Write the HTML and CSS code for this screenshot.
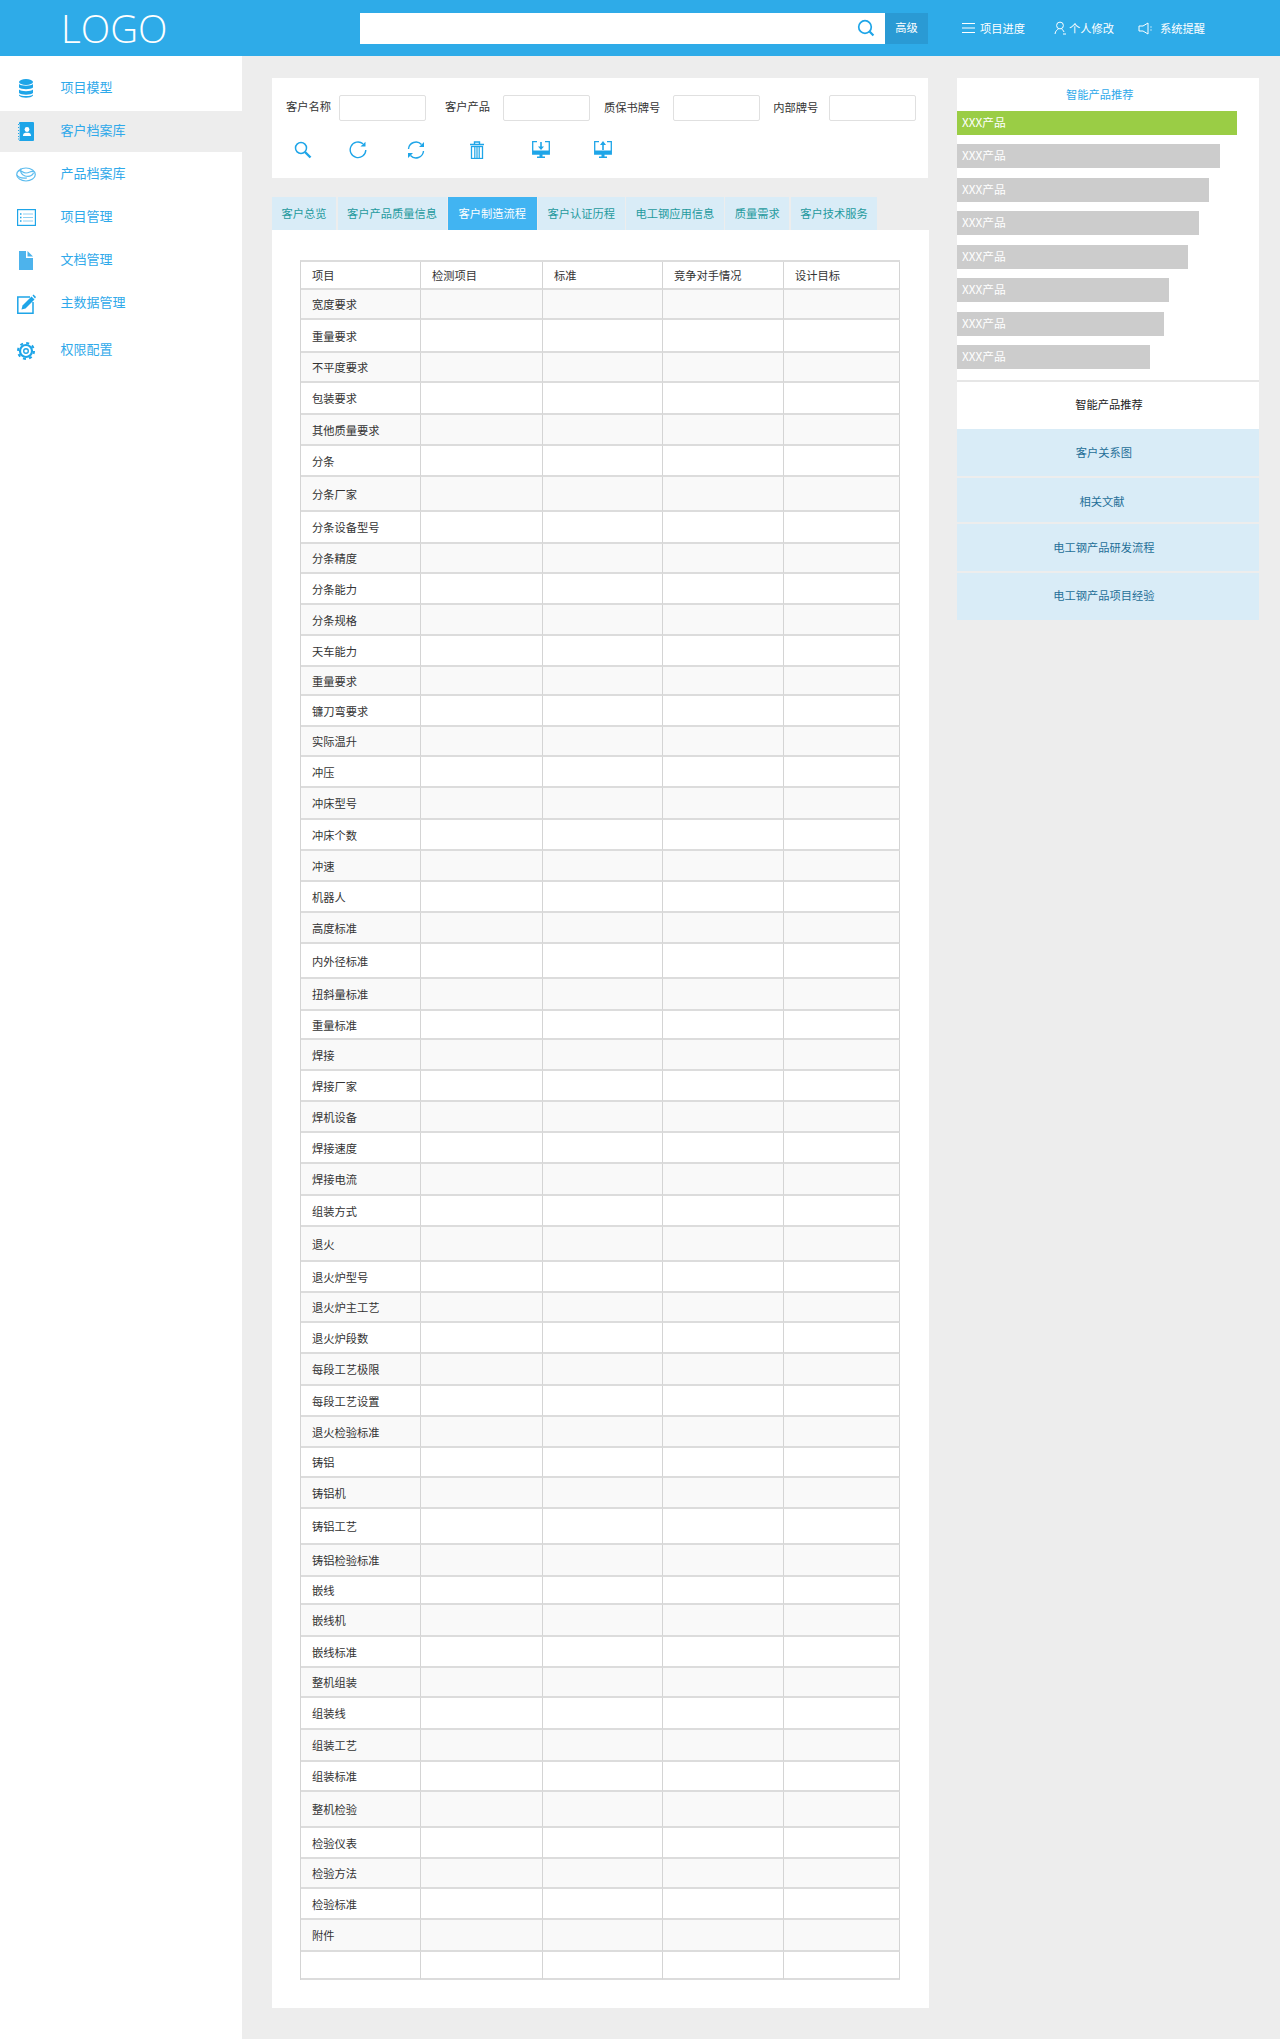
FILE: index.html
```html
<!DOCTYPE html>
<html lang="zh-CN">
<head>
    <meta charset="UTF-8">
    <title>客户制造流程</title>
    <link rel="stylesheet" href="styles.css">
</head>
<body>
    <header class="topbar">
        <div class="logo">LOGO</div>
        <div class="search">
            <div class="search-box">
                <svg class="search-icon" viewBox="0 0 18 18" width="18" height="18"><circle cx="8" cy="8" r="6.3" fill="none" stroke="#1ea5e8" stroke-width="1.7"/><path d="M12.6 12.6L16.4 16.6" stroke="#1ea5e8" stroke-width="2.2" fill="none"/></svg>
            </div>
            <div class="search-btn">高级</div>
        </div>
        <nav class="topnav">
            <a class="nav-first">
                <svg viewBox="0 0 13 12" width="13" height="12"><path d="M0 1.5H13M0 6H13M0 10.5H13" stroke="#fff" stroke-width="1" fill="none"/></svg>
                项目进度
            </a>
            <a class="nav-second">
                <svg viewBox="0 0 13 14" width="13" height="14"><circle cx="6" cy="4.5" r="3.4" fill="none" stroke="#fff"/><path d="M1 13C1.5 9.5 3.5 8.5 4.5 8M7.5 8C8.5 8.5 9.5 9.5 10 11M9 13H12" stroke="#fff" fill="none"/></svg>
                个人修改
            </a>
            <a class="nav-third">
                <svg viewBox="0 0 15 13" width="15" height="13"><path d="M1 4H5L10 1V12L5 9H1Z" fill="none" stroke="#fff"/><path d="M13 4.5V5.5M13 7.5V8.5" stroke="#fff" stroke-width="1.2"/></svg>
                系统提醒
            </a>
        </nav>
    </header>

    <div class="layout">
        <aside class="sidebar">
            <a class="side-item">
                <i class="side-icon"><svg viewBox="0 0 14 19" width="14" height="19"><ellipse cx="7" cy="3" rx="7" ry="3" fill="#1ea5e8"/><path d="M0 5C2 7.3 12 7.3 14 5V8.5C12 10.8 2 10.8 0 8.5Z" fill="#1ea5e8"/><path d="M0 10.5C2 12.8 12 12.8 14 10.5V14C12 16.3 2 16.3 0 14Z" fill="#1ea5e8"/><path d="M0 15.5C2 17.5 12 17.5 14 15.5V16.5C12 19.5 2 19.5 0 16.5Z" fill="#1ea5e8"/></svg></i>
                <span>项目模型</span>
            </a>
            <a class="side-item active">
                <i class="side-icon"><svg viewBox="0 0 16 19" width="16" height="19"><rect x="1" y="0" width="15" height="19" rx="1" fill="#1ea5e8"/><path d="M0 2.5H3M0 5.5H3M0 8.5H3M0 11.5H3M0 14.5H3M0 17H3" stroke="#1ea5e8" stroke-width="1"/><path d="M1.5 2V18" stroke="#ededed" stroke-width=".6"/><circle cx="9" cy="7.5" r="2.4" fill="#fff"/><path d="M5 14C5 11 7 10.8 9 10.8S13 11 13 14Z" fill="#fff"/></svg></i>
                <span>客户档案库</span>
            </a>
            <a class="side-item">
                <i class="side-icon"><svg viewBox="0 0 20 15" width="20" height="15" fill="none" stroke="#5dbcee" stroke-width="1.2"><ellipse cx="10" cy="7.5" rx="9.3" ry="6.5"/><path d="M2 4C5 2 6 6 10 6S15 3 18 5M5 1.5C4 4 5 8 9 9S16 9 17.5 6M1 8C3 12 8 11 11 11"/></svg></i>
                <span>产品档案库</span>
            </a>
            <a class="side-item">
                <i class="side-icon"><svg viewBox="0 0 19 17" width="19" height="17" fill="none" stroke="#1ea5e8"><rect x=".6" y=".6" width="17.8" height="15.8" stroke-width="1.2"/><path d="M6 5H16M6 8.5H16M6 12H16" stroke="#8fd0f3"/><path d="M3 5H4.5M3 8.5H4.5M3 12H4.5" stroke-width="1.4"/></svg></i>
                <span>项目管理</span>
            </a>
            <a class="side-item">
                <i class="side-icon"><svg viewBox="0 0 14 19" width="14" height="19"><path d="M0 0H7V7H14V19H0Z" fill="#4db3ec"/><path d="M8.5 0L14 5.5H8.5Z" fill="#4db3ec"/></svg></i>
                <span>文档管理</span>
            </a>
            <a class="side-item">
                <i class="side-icon"><svg viewBox="0 0 19 20" width="19" height="20"><path d="M13 3H.8V19.2H16V8" fill="none" stroke="#1ea5e8" stroke-width="1.5"/><path d="M4.5 15.5L5.5 11.5L14.5 2.5L17.5 5.5L8.5 14.5Z" fill="#1ea5e8"/><path d="M15.5 1.5L16.5 .5L19 3L18 4.5Z" fill="#1ea5e8"/></svg></i>
                <span>主数据管理</span>
            </a>
            <a class="side-item side-last">
                <i class="side-icon"><svg viewBox="0 0 18 18" width="18" height="18"><circle cx="9" cy="9" r="6" fill="none" stroke="#1ea5e8" stroke-width="2.2"/><circle cx="9" cy="9" r="8" fill="none" stroke="#1ea5e8" stroke-width="2" stroke-dasharray="3 3.28"/><circle cx="9" cy="9" r="2.3" fill="none" stroke="#1ea5e8" stroke-width="1.4"/></svg></i>
                <span>权限配置</span>
            </a>
        </aside>

        <main class="main">
            <section class="filter-card">
                <div class="fields">
                    <label class="field field-first"><span>客户名称</span><input type="text"></label>
                    <label class="field field-second"><span>客户产品</span><input type="text"></label>
                    <label class="field field-low"><span>质保书牌号</span><input type="text"></label>
                    <label class="field field-low field-last"><span>内部牌号</span><input type="text"></label>
                </div>
                <div class="tools">
                    <svg viewBox="0 0 18 18" width="18" height="18" fill="none" stroke="#1ea5e8"><circle cx="7" cy="7" r="5.5" stroke-width="1.5"/><path d="M11 11L16.5 16.5" stroke-width="2.4"/></svg>
                    <svg viewBox="0 0 18 18" width="18" height="18" fill="none" stroke="#1ea5e8"><path d="M14 2.8A7.8 7.8 0 1 0 16.8 9" stroke-width="1.4"/><path d="M11.5 5.5H16.5V.8Z" fill="#1ea5e8" stroke="none"/></svg>
                    <svg viewBox="0 0 18 18" width="18" height="18" fill="none" stroke="#1ea5e8"><path d="M1.5 8A7.5 7.5 0 0 1 14.5 3.5M16.5 10A7.5 7.5 0 0 1 3.5 14.5" stroke-width="1.4"/><path d="M12 6H17V1ZM6 12H1V17Z" fill="#1ea5e8" stroke="none"/></svg>
                    <svg viewBox="0 0 16 18" width="16" height="18" fill="none" stroke="#1ea5e8"><path d="M1 3.5H15M5.5 3V1H10.5V3" stroke-width="1.4"/><rect x="2.5" y="5.5" width="11" height="12" stroke-width="1.3"/><path d="M5.8 6V17M8 6V17M10.2 6V17" stroke-width="1.2"/></svg>
                    <svg viewBox="0 0 18 18" width="18" height="18"><path d="M5 .7H.7V13H17.3V.7H13" fill="none" stroke="#1ea5e8" stroke-width="1.3"/><path d="M1 9.5H17V13H1Z" fill="#1ea5e8"/><path d="M9 1V7" stroke="#1ea5e8" stroke-width="1.6"/><path d="M6 5.5H12L9 9Z" fill="#1ea5e8"/><path d="M7.5 13H10.5V15.5H13V17H5V15.5H7.5Z" fill="#1ea5e8"/></svg>
                    <svg viewBox="0 0 18 18" width="18" height="18"><path d="M5 .7H.7V13H17.3V.7H13" fill="none" stroke="#1ea5e8" stroke-width="1.3"/><path d="M1 9.5H17V13H1Z" fill="#1ea5e8"/><path d="M9 3V9" stroke="#1ea5e8" stroke-width="1.6"/><path d="M6 4H12L9 0Z" fill="#1ea5e8"/><path d="M7.5 13H10.5V15.5H13V17H5V15.5H7.5Z" fill="#1ea5e8"/></svg>
                </div>
            </section>

            <div class="tabs">
                <a class="tab">客户总览</a>
                <a class="tab">客户产品质量信息</a>
                <a class="tab active">客户制造流程</a>
                <a class="tab">客户认证历程</a>
                <a class="tab">电工钢应用信息</a>
                <a class="tab">质量需求</a>
                <a class="tab">客户技术服务</a>
            </div>

            <section class="table-card">
                <table class="grid">
                    <thead>
                        <tr class="h28"><th>项目</th><th>检测项目</th><th>标准</th><th>竞争对手情况</th><th>设计目标</th></tr>
                    </thead>
                    <tbody>
                        <tr class="h30"><td>宽度要求</td><td></td><td></td><td></td><td></td></tr>
                        <tr class="h33"><td>重量要求</td><td></td><td></td><td></td><td></td></tr>
                        <tr class="h30"><td>不平度要求</td><td></td><td></td><td></td><td></td></tr>
                        <tr class="h32"><td>包装要求</td><td></td><td></td><td></td><td></td></tr>
                        <tr><td>其他质量要求</td><td></td><td></td><td></td><td></td></tr>
                        <tr><td>分条</td><td></td><td></td><td></td><td></td></tr>
                        <tr class="h35"><td>分条厂家</td><td></td><td></td><td></td><td></td></tr>
                        <tr class="h32"><td>分条设备型号</td><td></td><td></td><td></td><td></td></tr>
                        <tr class="h30"><td>分条精度</td><td></td><td></td><td></td><td></td></tr>
                        <tr><td>分条能力</td><td></td><td></td><td></td><td></td></tr>
                        <tr><td>分条规格</td><td></td><td></td><td></td><td></td></tr>
                        <tr><td>天车能力</td><td></td><td></td><td></td><td></td></tr>
                        <tr class="h29"><td>重量要求</td><td></td><td></td><td></td><td></td></tr>
                        <tr><td>镰刀弯要求</td><td></td><td></td><td></td><td></td></tr>
                        <tr class="h30"><td>实际温升</td><td></td><td></td><td></td><td></td></tr>
                        <tr><td>冲压</td><td></td><td></td><td></td><td></td></tr>
                        <tr class="h32"><td>冲床型号</td><td></td><td></td><td></td><td></td></tr>
                        <tr><td>冲床个数</td><td></td><td></td><td></td><td></td></tr>
                        <tr><td>冲速</td><td></td><td></td><td></td><td></td></tr>
                        <tr><td>机器人</td><td></td><td></td><td></td><td></td></tr>
                        <tr><td>高度标准</td><td></td><td></td><td></td><td></td></tr>
                        <tr class="h35"><td>内外径标准</td><td></td><td></td><td></td><td></td></tr>
                        <tr class="h32"><td>扭斜量标准</td><td></td><td></td><td></td><td></td></tr>
                        <tr class="h29"><td>重量标准</td><td></td><td></td><td></td><td></td></tr>
                        <tr><td>焊接</td><td></td><td></td><td></td><td></td></tr>
                        <tr><td>焊接厂家</td><td></td><td></td><td></td><td></td></tr>
                        <tr><td>焊机设备</td><td></td><td></td><td></td><td></td></tr>
                        <tr><td>焊接速度</td><td></td><td></td><td></td><td></td></tr>
                        <tr class="h32"><td>焊接电流</td><td></td><td></td><td></td><td></td></tr>
                        <tr><td>组装方式</td><td></td><td></td><td></td><td></td></tr>
                        <tr class="h35"><td>退火</td><td></td><td></td><td></td><td></td></tr>
                        <tr><td>退火炉型号</td><td></td><td></td><td></td><td></td></tr>
                        <tr class="h30"><td>退火炉主工艺</td><td></td><td></td><td></td><td></td></tr>
                        <tr><td>退火炉段数</td><td></td><td></td><td></td><td></td></tr>
                        <tr class="h32"><td>每段工艺极限</td><td></td><td></td><td></td><td></td></tr>
                        <tr><td>每段工艺设置</td><td></td><td></td><td></td><td></td></tr>
                        <tr><td>退火检验标准</td><td></td><td></td><td></td><td></td></tr>
                        <tr class="h30"><td>铸铝</td><td></td><td></td><td></td><td></td></tr>
                        <tr><td>铸铝机</td><td></td><td></td><td></td><td></td></tr>
                        <tr class="h36"><td>铸铝工艺</td><td></td><td></td><td></td><td></td></tr>
                        <tr class="h32"><td>铸铝检验标准</td><td></td><td></td><td></td><td></td></tr>
                        <tr class="h28"><td>嵌线</td><td></td><td></td><td></td><td></td></tr>
                        <tr class="h32"><td>嵌线机</td><td></td><td></td><td></td><td></td></tr>
                        <tr><td>嵌线标准</td><td></td><td></td><td></td><td></td></tr>
                        <tr class="h30"><td>整机组装</td><td></td><td></td><td></td><td></td></tr>
                        <tr class="h32"><td>组装线</td><td></td><td></td><td></td><td></td></tr>
                        <tr class="h32"><td>组装工艺</td><td></td><td></td><td></td><td></td></tr>
                        <tr class="h30"><td>组装标准</td><td></td><td></td><td></td><td></td></tr>
                        <tr class="h36"><td>整机检验</td><td></td><td></td><td></td><td></td></tr>
                        <tr><td>检验仪表</td><td></td><td></td><td></td><td></td></tr>
                        <tr class="h30"><td>检验方法</td><td></td><td></td><td></td><td></td></tr>
                        <tr><td>检验标准</td><td></td><td></td><td></td><td></td></tr>
                        <tr class="h32"><td>附件</td><td></td><td></td><td></td><td></td></tr>
                        <tr class="h28"><td></td><td></td><td></td><td></td><td></td></tr>
                    </tbody>
                </table>
            </section>
        </main>

        <aside class="side-panel">
            <div class="rank-card">
                <h3 class="rank-title">智能产品推荐</h3>
                <div class="bars">
                    <div class="bar bar-top" style="width: 280px">XXX产品</div>
                    <div class="bar" style="width: 263px">XXX产品</div>
                    <div class="bar" style="width: 252px">XXX产品</div>
                    <div class="bar" style="width: 242px">XXX产品</div>
                    <div class="bar" style="width: 231px">XXX产品</div>
                    <div class="bar" style="width: 212px">XXX产品</div>
                    <div class="bar" style="width: 207px">XXX产品</div>
                    <div class="bar" style="width: 193px">XXX产品</div>
                </div>
            </div>
            <div class="links-card">
                <h3 class="links-title">智能产品推荐</h3>
                <a class="link-row">客户关系图</a>
                <a class="link-row link-short">相关文献</a>
                <a class="link-row">电工钢产品研发流程</a>
                <a class="link-row link-last">电工钢产品项目经验</a>
            </div>
        </aside>
    </div>
</body>
</html>
```

FILE: styles.css
```css
:root {
    --blue: #2eabe8;
    --pale-blue: #d9ecf7;
    --page-bg: #ededed;
    --line: #dcdcdc;
}

* {
    box-sizing: border-box;
}

body {
    margin: 0;
    min-height: 2039px;
    background: var(--page-bg);
    color: #333;
    font-family: "Noto Sans CJK SC", "Liberation Sans", sans-serif;
    font-size: 11.25px;
}

h3 {
    margin: 0;
    font-weight: normal;
    font-size: 11.25px;
}

/* top bar */
.topbar {
    display: flex;
    align-items: center;
    height: 56px;
    background: var(--blue);
    color: #fff;
}

.logo {
    width: 360px;
    padding-left: 61px;
    font-family: "Open Sans", sans-serif;
    font-size: 38.5px;
    font-weight: 300;
    line-height: 56px;
}

.search {
    display: flex;
    width: 568px;
    height: 31px;
}

.search-box {
    display: flex;
    flex: 1;
    align-items: center;
    justify-content: flex-end;
    padding-right: 10px;
    background: #fff;
}

.search-btn {
    width: 43px;
    background: #2a9ad4;
    line-height: 29px;
    text-align: center;
}

.topnav {
    display: flex;
    align-items: center;
    padding-left: 34px;
}

.topnav a {
    display: flex;
    align-items: center;
    gap: 5px;
}

.topnav .nav-first {
    margin-right: 29px;
}

.topnav .nav-second {
    gap: 2px;
    margin-right: 24px;
}

.topnav .nav-third {
    gap: 7px;
}

/* left menu */
.layout {
    display: flex;
    align-items: flex-start;
}

.sidebar {
    width: 242px;
    min-height: 1983px;
    padding-top: 12px;
    background: #fff;
}

.side-item {
    display: flex;
    align-items: center;
    height: 41px;
    margin-bottom: 2px;
    color: #2fa9ea;
    font-size: 13px;
}

.side-item.active {
    background: var(--page-bg);
}

.side-icon {
    display: flex;
    justify-content: center;
    width: 20px;
    margin: 0 24.5px 0 16px;
}

.side-item span {
    margin-bottom: 5px;
}

.side-last {
    margin-top: 6px;
}

/* main column */
.main {
    width: 657px;
    margin: 22px 0 0 30px;
}

.filter-card {
    width: 656px;
    height: 100px;
    padding: 16px 0 0 14px;
    background: #fff;
}

.fields {
    display: flex;
}

.field {
    display: flex;
    align-items: center;
    gap: 13px;
    margin-right: 13px;
}

.field span {
    margin-bottom: 3px;
}

.field input {
    width: 87px;
    height: 26px;
    padding: 0;
    border: 1px solid #e0e0e0;
    border-radius: 2px;
    background: #fff;
}

.field-first {
    gap: 8px;
    margin-right: 19px;
}

.field-second {
    margin-right: 14px;
}

.field-low {
    padding-top: 1px;
}

.field-last {
    gap: 11px;
    margin-right: 0;
}

.tools {
    display: flex;
    align-items: center;
    margin-top: 20px;
    padding-left: 8px;
}

.tools svg:nth-child(2) {
    margin-left: 37px;
}

.tools svg:nth-child(3) {
    margin-left: 40px;
}

.tools svg:nth-child(4) {
    margin-left: 44px;
}

.tools svg:nth-child(5) {
    margin-left: 47px;
}

.tools svg:nth-child(6) {
    margin-left: 44px;
}

.tabs {
    display: flex;
    gap: 1.5px;
    margin-top: 19px;
}

.tab {
    padding: 0 9.5px;
    background: var(--pale-blue);
    color: #1f9a9e;
    line-height: 33px;
}

.tab.active {
    padding: 0 10.5px;
    background: #41b4f2;
    color: #fff;
}

.table-card {
    height: 1778px;
    padding: 30px 0 0 28px;
    background: #fff;
}

.grid {
    width: 600px;
    border-collapse: separate;
    border-spacing: 0;
    border-top: 2px solid var(--line);
    border-left: 1px solid #d4d4d4;
    table-layout: fixed;
}

.grid th,
.grid td {
    padding: 0 0 0 11px;
    border-right: 1px solid #d4d4d4;
    border-bottom: 2px solid var(--line);
    font-weight: normal;
    text-align: left;
}

.grid th:nth-child(1) { width: 120px; }
.grid th:nth-child(2) { width: 122px; }
.grid th:nth-child(3) { width: 120px; }
.grid th:nth-child(4) { width: 121px; }
.grid th:nth-child(5) { width: 116px; }

.grid tr {
    height: 31px;
}

.grid tbody tr:nth-child(odd) td {
    background: #f9f9f9;
}

.grid tr.h28 { height: 28px; }
.grid tr.h29 { height: 29px; }
.grid tr.h30 { height: 30px; }
.grid tr.h32 { height: 32px; }
.grid tr.h33 { height: 33px; }
.grid tr.h35 { height: 35px; }
.grid tr.h36 { height: 36px; }

/* right column */
.side-panel {
    width: 302px;
    margin: 22px 0 0 28px;
}

.rank-card {
    height: 304px;
    border-bottom: 2px solid #e6e6e6;
    background: #fff;
}

.rank-title {
    padding: 8px 0 0 109px;
    color: #2fa9ea;
    line-height: 17px;
}

.bars {
    display: flex;
    flex-direction: column;
    gap: 9.5px;
    margin-top: 7.5px;
}

.bar {
    height: 24px;
    padding-left: 5px;
    background: #ccc;
    color: #fff;
    font-size: 11.75px;
    line-height: 22px;
}

.bar-top {
    background: #9acd45;
}

.links-card {
    display: flex;
    flex-direction: column;
    gap: 2px;
    background: var(--page-bg);
}

.links-title {
    height: 47px;
    margin-bottom: -2px;
    padding-left: 2px;
    background: #fff;
    color: #222;
    line-height: 44px;
    text-align: center;
}

.link-row {
    height: 47px;
    padding-right: 8px;
    background: var(--pale-blue);
    color: #1f6f97;
    line-height: 47px;
    text-align: center;
}

.link-short {
    height: 44px;
    padding-right: 12px;
    line-height: 46px;
}

.link-last {
    line-height: 45px;
}
```
